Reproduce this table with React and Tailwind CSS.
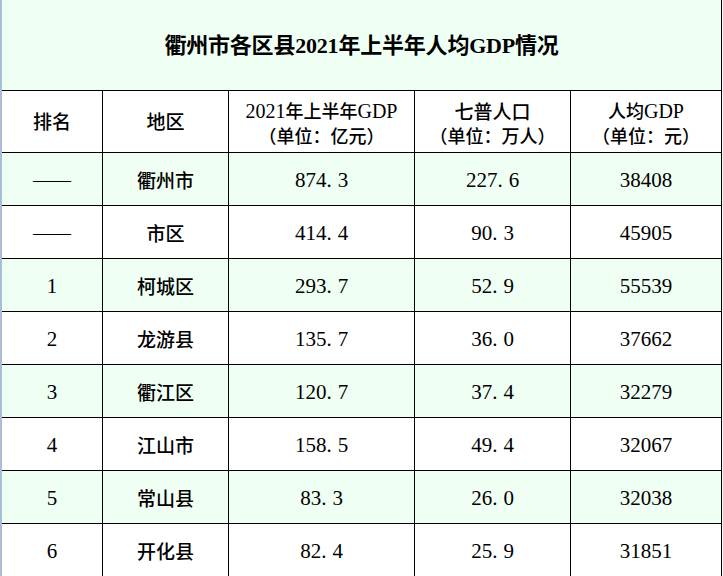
import React from "react";

const rows = [
  { rank: "——", area: "衢州市", gdp: "874.3", pop: "227.6", per: "38408", green: true },
  { rank: "——", area: "市区", gdp: "414.4", pop: "90.3", per: "45905", green: false },
  { rank: "1", area: "柯城区", gdp: "293.7", pop: "52.9", per: "55539", green: true },
  { rank: "2", area: "龙游县", gdp: "135.7", pop: "36.0", per: "37662", green: false },
  { rank: "3", area: "衢江区", gdp: "120.7", pop: "37.4", per: "32279", green: true },
  { rank: "4", area: "江山市", gdp: "158.5", pop: "49.4", per: "32067", green: false },
  { rank: "5", area: "常山县", gdp: "83.3", pop: "26.0", per: "32038", green: true },
  { rank: "6", area: "开化县", gdp: "82.4", pop: "25.9", per: "31851", green: false },
];

const cjk = "font-['Noto_Sans_CJK_SC',sans-serif] font-medium";
const serif = "font-['Liberation_Serif','Noto_Sans_CJK_SC',serif]";
const cols = "grid grid-cols-[101px_126px_186px_156px_151px]";
const cell = "flex items-center justify-center border-r border-b border-black text-black";

// the period in the source sits in a wide half-width slot
const Num = ({ value }) => {
  const [a, b] = value.split(".");
  if (b === undefined) return <span>{a}</span>;
  return (
    <span>
      {a}
      <span className="mr-[6px]">.</span>
      {b}
    </span>
  );
};

const App = () => {
  return (
    <div className="w-[723px] h-[576px] overflow-hidden bg-white border-l-2 border-[#a9bdd6]">
      <div className="w-[720px] h-[91px] flex items-center justify-center bg-[#f0fff4] border-r border-b border-black">
        <h1 className={`text-[22px] font-bold text-black ${serif} tracking-[-0.2px]`}>
          衢州市各区县2021年上半年人均GDP情况
        </h1>
      </div>

      <div className={`${cols} h-[62px]`}>
        <div className={`${cell} ${cjk} text-[19px]`}>排名</div>
        <div className={`${cell} ${cjk} text-[19px]`}>地区</div>
        <div className={`${cell} flex-col leading-[24px] text-[18px] pt-[2px]`}>
          <span className={`${serif} text-[20px]`}>
            2021<span className={cjk + " text-[18px]"}>年上半年</span>GDP
          </span>
          <span className={cjk}>（单位：亿元）</span>
        </div>
        <div className={`${cell} flex-col leading-[24px] ${cjk} text-[18px] pt-[2px]`}>
          <span className="text-[19px]">七普人口</span>
          <span>（单位：万人）</span>
        </div>
        <div className={`${cell} flex-col leading-[24px] text-[18px] pt-[2px]`}>
          <span className={`${serif} text-[20px]`}>
            <span className={cjk + " text-[18px]"}>人均</span>GDP
          </span>
          <span className={cjk}>（单位：元）</span>
        </div>
      </div>

      {rows.map((r, i) => (
        <div
          key={i}
          className={`${cols} h-[53px] ${r.green ? "bg-[#f0fff4]" : "bg-white"}`}
        >
          <div
            className={`${cell} pt-[3px] ${serif} ${
              r.rank === "——" ? "text-[19px]" : "text-[21px]"
            }`}
          >
            {r.rank}
          </div>
          <div className={`${cell} ${cjk} text-[19px] pt-[3px]`}>{r.area}</div>
          <div className={`${cell} ${serif} text-[21px] pt-[3px]`}>
            <Num value={r.gdp} />
          </div>
          <div className={`${cell} ${serif} text-[21px] pt-[3px]`}>
            <Num value={r.pop} />
          </div>
          <div className={`${cell} ${serif} text-[21px] pt-[3px]`}>{r.per}</div>
        </div>
      ))}
    </div>
  );
};

export default App;
